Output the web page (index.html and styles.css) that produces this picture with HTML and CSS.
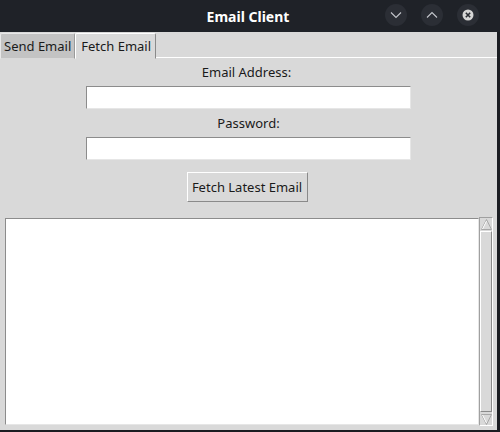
FILE: index.html
```html
<!DOCTYPE html>
<html>
<head>
<meta charset="utf-8">
<link rel="stylesheet" href="styles.css">
</head>
<body>
<div class="window">
  <div class="titlebar">
    <div class="title">Email Client</div>
    <div class="controls">
      <div class="ctl"><svg width="12" height="8" viewBox="0 0 12 8"><path d="M1 1.5 L6 6.5 L11 1.5" fill="none" stroke="#c4c7cc" stroke-width="1.1"/></svg></div>
      <div class="ctl"><svg width="12" height="8" viewBox="0 0 12 8"><path d="M1 6.5 L6 1.5 L11 6.5" fill="none" stroke="#c4c7cc" stroke-width="1.1"/></svg></div>
      <div class="ctl"><svg width="12" height="12" viewBox="0 0 12 12"><circle cx="6" cy="6" r="5.5" fill="#d6d6d6"/><path d="M3.8 3.8 L8.2 8.2 M8.2 3.8 L3.8 8.2" stroke="#2a2d33" stroke-width="1.6"/></svg></div>
    </div>
  </div>
  <div class="tabbar">
    <div class="tab">Send Email</div>
    <div class="tab active">Fetch Email</div>
    <div class="tabfill"></div>
  </div>
  <div class="panel">
    <div class="form">
      <div class="label">Email Address:</div>
      <div class="entry"></div>
      <div class="label l2">Password:</div>
      <div class="entry"></div>
      <div class="button">Fetch Latest Email</div>
    </div>
    <div class="output">
      <div class="text"></div>
      <div class="scrollbar">
        <div class="arrow up"><svg width="11" height="11" viewBox="0 0 11 11"><path d="M0.5 10.5 L5.5 0.5 L10.5 10.5 Z" fill="#d9d9d9" stroke="#a8a8a8"/><path d="M1.5 10 L5.5 2" stroke="#fff"/></svg></div>
        <div class="trough"></div>
        <div class="arrow down"><svg width="11" height="11" viewBox="0 0 11 11"><path d="M0.5 0.5 L5.5 10.5 L10.5 0.5 Z" fill="#d9d9d9" stroke="#a8a8a8"/><path d="M1.5 1 L5.5 9" stroke="#fff"/></svg></div>
      </div>
    </div>
  </div>
</div>
</body>
</html>
```

FILE: styles.css
```css
* { box-sizing: border-box; }
html, body { margin: 0; padding: 0; background: #1b1d22; }
.window {
  width: 500px;
  height: 432px;
  display: flex;
  flex-direction: column;
  font-family: "Noto Sans", "DejaVu Sans", sans-serif;
  font-size: 13px;
  color: #1a1a1a;
}
.titlebar {
  height: 32px;
  background: #1f2228;
  display: flex;
  align-items: center;
  justify-content: center;
  position: relative;
}
.title {
  color: #ffffff;
  font-weight: bold;
  font-size: 14px;
  margin-left: -4px;
}
.controls {
  position: absolute;
  right: 21px;
  top: 4px;
  display: flex;
  gap: 14px;
}
.ctl {
  width: 22px;
  height: 22px;
  border-radius: 50%;
  background: #2b2e35;
  display: flex;
  align-items: center;
  justify-content: center;
}
.tabbar {
  height: 27px;
  background: #d9d9d9;
  display: flex;
  align-items: flex-end;
  margin-right: 3px;
}
.tab {
  height: 26px;
  padding: 0 3px 0 3px;
  display: flex;
  align-items: center;
  background: #c3c3c3;
  border-top: 1px solid #e8e8e8;
  border-left: 1px solid #e8e8e8;
  border-right: 1px solid #9a9a9a;
  border-bottom: 1px solid #d9d9d9;
  border-radius: 2px 2px 0 0;
  font-size: 13px;
}
.tab.active {
  background: #d9d9d9;
  border-top: 1px solid #ffffff;
  border-left: 1px solid #ffffff;
  border-right: 1px solid #8a8a8a;
  padding: 0 4px 0 5px;
}
.tabfill {
  flex: 1;
  height: 1px;
  background: #ffffff;
  margin-bottom: 1px;
}
.panel {
  flex: 1;
  background: #d9d9d9;
  margin-right: 3px;
  margin-bottom: 2px;
  display: flex;
  flex-direction: column;
}
.form {
  display: flex;
  flex-direction: column;
  align-items: center;
  padding-top: 4px;
}
.label {
  height: 19px;
  line-height: 19px;
  margin-left: -4px;
}
.l2 { margin-top: 5px; margin-left: 0; }
.entry {
  width: 325px;
  height: 23px;
  margin-top: 4px;
  background: #ffffff;
  border-top: 1px solid #8c8c8c;
  border-left: 1px solid #8c8c8c;
  border-right: 1px solid #e6e6e6;
  border-bottom: 1px solid #e6e6e6;
}
.button {
  margin-top: 12px;
  margin-left: -3px;
  width: 121px;
  height: 30px;
  display: flex;
  align-items: center;
  justify-content: center;
  background: #d9d9d9;
  border-top: 1px solid #ffffff;
  border-left: 1px solid #ffffff;
  border-right: 1px solid #8a8a8a;
  border-bottom: 1px solid #8a8a8a;
}
.output {
  margin-top: 15px;
  display: flex;
  padding-left: 5px;
  height: 209px;
}
.text {
  width: 474px;
  height: 207px;
  margin-top: 1px;
  background: #ffffff;
  border-top: 1px solid #8c8c8c;
  border-left: 1px solid #8c8c8c;
  border-right: 1px solid #e6e6e6;
  border-bottom: 1px solid #e6e6e6;
}
.scrollbar {
  width: 14px;
  height: 209px;
  background: #d9d9d9;
  border: 1px solid #a0a0a0;
  border-right-color: #ffffff;
  border-bottom-color: #ffffff;
  display: flex;
  flex-direction: column;
}
.arrow {
  height: 12px;
  display: flex;
  align-items: center;
  justify-content: center;
}
.trough {
  flex: 1;
  margin: 1px 0;
  border-top: 1px solid #ffffff;
  border-left: 1px solid #ffffff;
  border-right: 1px solid #8a8a8a;
  border-bottom: 1px solid #8a8a8a;
  background: #d9d9d9;
}
```
